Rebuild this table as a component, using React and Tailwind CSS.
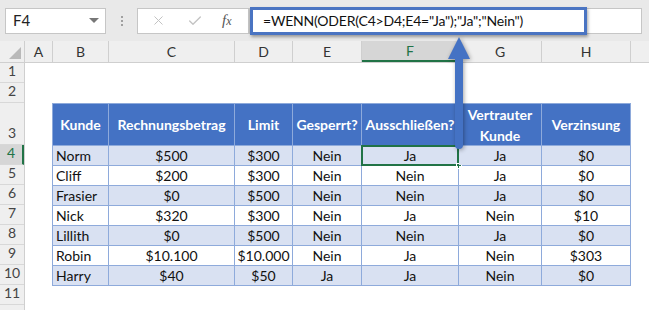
import { X, Check } from "lucide-react";

const cols = ["A", "B", "C", "D", "E", "F", "G", "H"];

const colWidth = {
  A: "w-[28px]",
  B: "w-[56px]",
  C: "w-[126px]",
  D: "w-[58px]",
  E: "w-[69px]",
  F: "w-[97px]",
  G: "w-[83px]",
  H: "w-[89px]",
};

const rowHeights = [
  "h-[20px]", "h-[20px]", "h-[42px]", "h-[20px]", "h-[20px]", "h-[20px]",
  "h-[20px]", "h-[20px]", "h-[20px]", "h-[20px]", "h-[20px]", "h-[20px]",
];

const headers = ["Kunde", "Rechnungsbetrag", "Limit", "Gesperrt?", "Ausschließen?", "Vertrauter Kunde", "Verzinsung"];

const rows = [
  ["Norm", "$500", "$300", "Nein", "Ja", "Ja", "$0"],
  ["Cliff", "$200", "$300", "Nein", "Nein", "Ja", "$0"],
  ["Frasier", "$0", "$500", "Nein", "Nein", "Ja", "$0"],
  ["Nick", "$320", "$300", "Nein", "Ja", "Nein", "$10"],
  ["Lillith", "$0", "$500", "Nein", "Nein", "Ja", "$0"],
  ["Robin", "$10.100", "$10.000", "Nein", "Ja", "Nein", "$303"],
  ["Harry", "$40", "$50", "Ja", "Ja", "Nein", "$0"],
];

function FormulaBar() {
  return (
    <div className="h-[41px] bg-[#e9e9e9] flex items-center">
      <div className="ml-[5px] w-[101px] h-[26px] bg-white border border-[#c6c6c6] flex items-center justify-between pl-[7px] pr-[6px]">
        <span className="text-[15px] text-[#222]">F4</span>
        <span className="w-0 h-0 border-l-[5px] border-r-[5px] border-t-[5px] border-l-transparent border-r-transparent border-t-[#777]" />
      </div>
      <div className="w-[31px] flex flex-col items-center gap-[2px]">
        <span className="w-[2px] h-[2px] bg-[#a0a0a0]" />
        <span className="w-[2px] h-[2px] bg-[#a0a0a0]" />
        <span className="w-[2px] h-[2px] bg-[#a0a0a0]" />
      </div>
      <div className="w-[112px] h-[26px] bg-white border border-[#c6c6c6] flex items-center pl-[13px]">
        <X size={15} strokeWidth={1.6} className="text-[#c3c3c3]" />
        <Check size={16} strokeWidth={2} className="text-[#c3c3c3] ml-[21px]" />
        <span className="ml-[19px] text-[15px] italic font-['Liberation_Serif',serif] text-[#555]">
          f<span className="text-[12px]">x</span>
        </span>
      </div>
      <div className="relative flex-1 h-[26px] bg-white border border-[#c6c6c6] mr-[7px]">
        <div className="absolute left-0 top-[-2px] w-[337px] h-[28px] border-[3px] border-[#4a74c2] shadow-[1px_2px_3px_rgba(0,0,0,0.35)] flex items-center pl-[10px]">
          <span className="text-[14px] tracking-[-0.2px] text-[#111] whitespace-nowrap">=WENN(ODER(C4&gt;D4;E4="Ja");"Ja";"Nein")</span>
        </div>
      </div>
    </div>
  );
}

function ColumnHeaders() {
  return (
    <div className="flex h-[22px] bg-[#efefef] border-b border-[#cfcfcf]">
      <div className="w-[25px] border-r border-[#cfcfcf] relative">
        <span className="absolute right-[3px] bottom-[3px] w-0 h-0 border-b-[12px] border-l-[12px] border-b-[#b9b9b9] border-l-transparent" />
      </div>
      {cols.map((c) => (
        <div
          key={c}
          className={`${colWidth[c]} border-r border-[#cfcfcf] flex items-center justify-center text-[14px] ${
            c === "F" ? "bg-[#d6d6d6] text-[#217346] border-b-2 border-b-[#217346]" : "text-[#333]"
          }`}
        >
          {c}
        </div>
      ))}
      <div className="flex-1" />
    </div>
  );
}

function RowHeaders() {
  return (
    <div className="w-[25px] bg-[#efefef] border-r border-[#cfcfcf] flex flex-col">
      {rowHeights.map((h, i) => (
        <div
          key={i}
          className={`${h} border-b border-[#d8d8d8] flex items-end justify-center pb-[1px] text-[14px] ${
            i === 3 ? "bg-[#d6d6d6] text-[#217346] border-r-2 border-r-[#217346]" : "text-[#444]"
          }`}
        >
          {i < 11 ? i + 1 : ""}
        </div>
      ))}
    </div>
  );
}

function DataTable() {
  return (
    <div className="grid grid-cols-[55px_125px_57px_68px_96px_82px_88px] grid-rows-[41px_repeat(7,19px)] gap-px bg-[#8eaadb] p-px w-fit">
      {headers.map((h) => (
        <div key={h} className="bg-[#4472c4] text-white font-bold text-[14px] leading-[21px] flex items-center justify-center text-center px-[2px]">
          {h}
        </div>
      ))}
      {rows.map((r, ri) =>
        r.map((v, ci) => (
          <div
            key={`${ri}-${ci}`}
            className={`relative flex items-center text-[14px] text-[#111] ${ci === 0 ? "pl-[3px]" : "justify-center"} ${
              ri % 2 === 0 ? "bg-[#d9e1f2]" : "bg-white"
            }`}
          >
            {v}
            {ri === 0 && ci === 4 && (
              <>
                <span className="absolute inset-[-1px] border-2 border-[#217346]" />
                <span className="absolute right-[-4px] bottom-[-4px] w-[6px] h-[6px] bg-[#217346] border border-white" />
              </>
            )}
          </div>
        ))
      )}
    </div>
  );
}

export default function App() {
  return (
    <div className="relative w-[649px] h-[310px] overflow-hidden bg-white font-['Lato',sans-serif]">
      <FormulaBar />
      <ColumnHeaders />
      <div className="flex">
        <RowHeaders />
        <div className="pl-[27px] pt-[40px]">
          <DataTable />
        </div>
      </div>

      {/* callout arrow from the formula box down to F4 */}
      <svg className="absolute left-[440px] top-[30px] drop-shadow-[1px_1px_2px_rgba(0,0,0,0.35)]" width="40" height="125" viewBox="0 0 40 125">
        <polygon points="19,7 8,29 30,29" fill="#4472c4" />
        <path d="M15 27 H23 V115 a4 4 0 0 1 -8 0 Z" fill="#4472c4" />
      </svg>
    </div>
  );
}
